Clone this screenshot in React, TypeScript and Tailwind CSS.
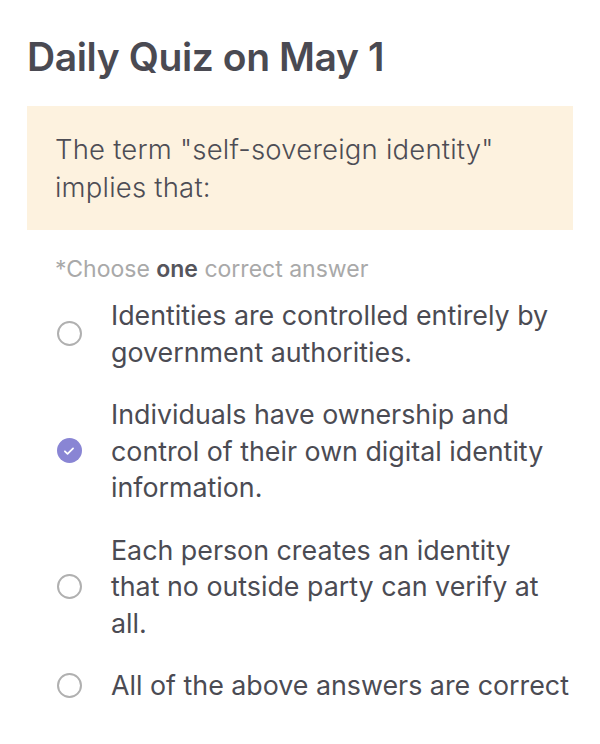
import React, { useState } from 'react';

const options = [
  ['Identities are controlled entirely by', 'government authorities.'],
  ['Individuals have ownership and', 'control of their own digital identity', 'information.'],
  ['Each person creates an identity', 'that no outside party can verify at', 'all.'],
  ['All of the above answers are correct'],
];

const App = () => {
  const [selected, setSelected] = useState(1);

  return (
    <div className="w-[600px] min-h-[744px] bg-white px-[27px] pt-[30px] text-[#4b4b53] font-['Inter',sans-serif]">
      <h1 className="text-[39px] font-semibold tracking-[-0.4px] leading-[54px] text-[#4a4a52]">Daily Quiz on May 1</h1>

      <div className="mt-[22px] bg-[#fdf2df] px-[28px] pt-[24px] pb-[24px]">
        <p className="text-[27.5px] font-light tracking-[0.2px] leading-[38px] text-[#4d4d55]">
          The term "self-sovereign identity"
          <br />
          implies that:
        </p>
      </div>

      <p className="mt-[25px] pl-[28px] text-[23px] leading-[28px] text-[#a9a9a9]">
        *Choose <span className="font-semibold text-[#55555c]">one</span> correct answer
      </p>

      <div className="mt-[14px] flex flex-col gap-[26px]">
        {options.map((lines, idx) => (
          <button
            key={idx}
            onClick={() => setSelected(idx)}
            className="flex items-center text-left cursor-pointer"
          >
            <span className="w-[84px] shrink-0 flex justify-center">
              {selected === idx ? (
                <span className="w-[25px] h-[25px] rounded-full bg-[#8985d4] flex items-center justify-center">
                  <svg width="14" height="14" viewBox="0 0 24 24" fill="none" stroke="white" strokeWidth="3" strokeLinecap="round" strokeLinejoin="round">
                    <path d="M5 12.5l4.5 4.5L19 7.5" />
                  </svg>
                </span>
              ) : (
                <span className="w-[25px] h-[25px] rounded-full border-2 border-[#b0b0b0]" />
              )}
            </span>
            <span className="text-[26.8px] leading-[36.5px] text-[#4b4b53] whitespace-nowrap">
              {lines.map((line, i) => (
                <span key={i} className="block">{line}</span>
              ))}
            </span>
          </button>
        ))}
      </div>
    </div>
  );
};

export default App;
